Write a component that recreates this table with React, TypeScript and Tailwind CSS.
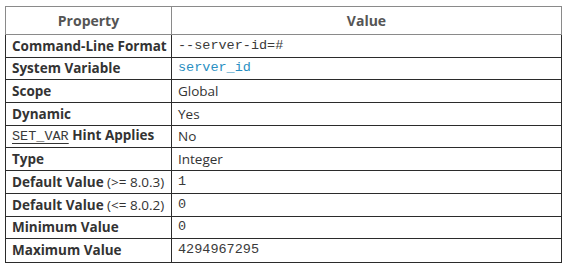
import React from "react";

type Row = { label: React.ReactNode; value: React.ReactNode };

const mono = "font-['Liberation_Mono','Courier_New',monospace] text-[13.5px] text-[#3a3a3a]";

const rows: Row[] = [
  { label: <b>Command-Line Format</b>, value: <span className={mono}>--server-id=#</span> },
  { label: <b>System Variable</b>, value: <span className="font-['Liberation_Mono','Courier_New',monospace] text-[13.5px] text-[#2a8fc2]">server_id</span> },
  { label: <b>Scope</b>, value: "Global" },
  { label: <b>Dynamic</b>, value: "Yes" },
  {
    label: (
      <span>
        <span className={`${mono} underline underline-offset-[3px] decoration-[#333] font-normal`}>SET_VAR</span>{" "}
        <b>Hint Applies</b>
      </span>
    ),
    value: "No",
  },
  { label: <b>Type</b>, value: "Integer" },
  {
    label: (
      <span>
        <b>Default Value</b> (&gt;= 8.0.3)
      </span>
    ),
    value: <span className={mono}>1</span>,
  },
  {
    label: (
      <span>
        <b>Default Value</b> (&lt;= 8.0.2)
      </span>
    ),
    value: <span className={mono}>0</span>,
  },
  { label: <b>Minimum Value</b>, value: <span className={mono}>0</span> },
  { label: <b>Maximum Value</b>, value: <span className={mono}>4294967295</span> },
];

export default function App() {
  return (
    <div className="w-[566px] h-[267px] bg-white pt-[6px] pl-[5px] font-['Open_Sans',sans-serif] text-[13.5px] text-[#333]">
      <div className="w-[557px]">
        <div className="flex h-[29px] border border-[#8a8a8a] text-[#555] font-bold text-[14px]">
          <div className="w-[166px] flex items-center justify-center border-r border-[#8a8a8a]">Property</div>
          <div className="flex-1 flex items-center justify-center">Value</div>
        </div>
        <div className="border-x border-b border-[#2b2b2b]">
          {rows.map((r, i) => (
            <div
              key={i}
              className={`flex h-[22.7px] ${i < rows.length - 1 ? "border-b border-[#2b2b2b]" : ""}`}
            >
              <div className="w-[166px] flex items-center pl-[6px] pr-[2px] border-r border-[#2b2b2b] whitespace-nowrap">
                {r.label}
              </div>
              <div className="flex-1 flex items-center pl-[6px] whitespace-nowrap">{r.value}</div>
            </div>
          ))}
        </div>
      </div>
    </div>
  );
}
